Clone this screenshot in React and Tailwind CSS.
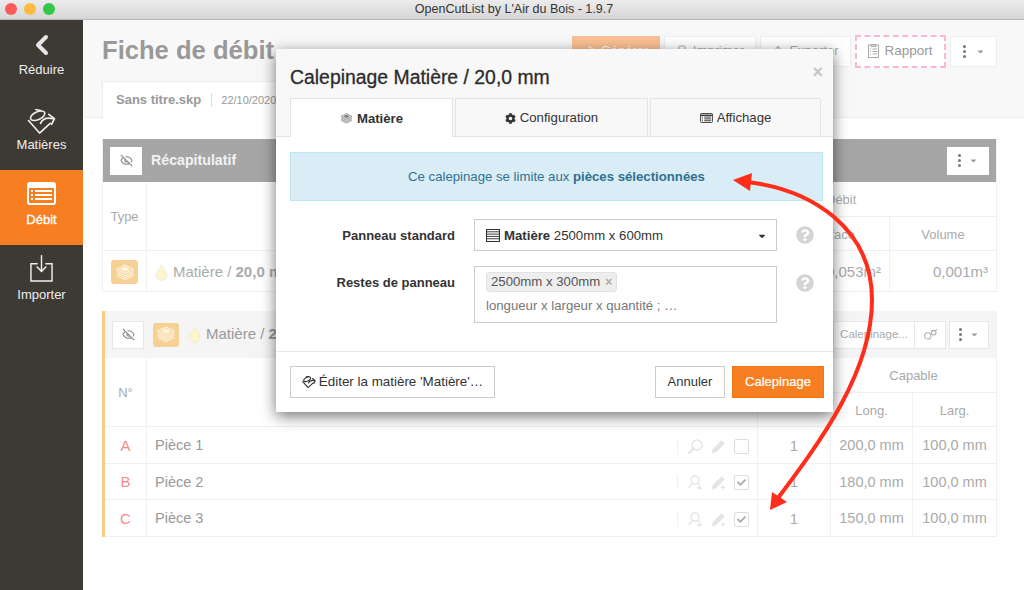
import { FaCog, FaQuestionCircle, FaCaretDown, FaCheck } from 'react-icons/fa';
import { EyeOff, Upload, Recycle, Printer } from 'lucide-react';

const StackIcon = ({ className, color = 'white' }) => (
    <svg viewBox="0 0 24 20" className={className} fill="none" stroke={color} strokeWidth="1.3" strokeLinejoin="round">
        <path d="M12 1 L22 6 L12 11 L2 6 Z" />
        <path d="M7 6 L12 8.5 L17 6 L12 3.5 Z" fill={color} />
        <path d="M2 8.5 L12 13.5 L22 8.5" />
        <path d="M2 11 L12 16 L22 11" />
        <path d="M2 13.5 L12 18.5 L22 13.5" />
    </svg>
);

const BucketIcon = ({ className, strokeWidth = 2 }) => (
    <svg viewBox="0 0 30 26" className={className} fill="none" stroke="currentColor" strokeWidth={strokeWidth} strokeLinejoin="round" strokeLinecap="round">
        <ellipse cx="11" cy="7" rx="8" ry="4" transform="rotate(-25 11 7)" />
        <path d="M9 0.5 L14 1.5" />
        <path d="M1.5 12 L13 25 L24 15" />
        <path d="M14 15 C16 10 20 8.5 27 10" />
        <path d="M22.5 5.5 L28.5 10 L25.5 16" />
    </svg>
);

const ListIcon = () => (
    <svg viewBox="0 0 29 23" className="w-[29px] h-[23px]">
        <rect x="0" y="0" width="29" height="23" rx="3" fill="white" />
        <rect x="2" y="6" width="25" height="15" fill="#f77f21" />
        <g fill="white">
            <rect x="4" y="8" width="2" height="2" />
            <rect x="4" y="12" width="2" height="2" />
            <rect x="4" y="16" width="2" height="2" />
            <rect x="8" y="8" width="17" height="2" />
            <rect x="8" y="12" width="17" height="2" />
            <rect x="8" y="16" width="17" height="2" />
        </g>
    </svg>
);

const ImportIcon = () => (
    <svg viewBox="0 0 24 28" className="w-[23px] h-[27px]" fill="none" stroke="#eeeeee" strokeWidth="1.5">
        <path d="M8 9 H1 V27 H23 V9 H16" />
        <path d="M12 0 V17" />
        <path d="M7 12 L12 17 L17 12" />
    </svg>
);

const Drop = ({ className }) => (
    <svg viewBox="0 0 14 18" className={className}>
        <path d="M7 1 C9 5 13 8 13 12 A6 5.5 0 0 1 1 12 C1 8 5 5 7 1 Z" fill="#fdf5cb" stroke="#e8e8e8" strokeWidth="0.8" />
    </svg>
);

const TableIcon = () => (
    <svg viewBox="0 0 15 14" className="w-[14px] h-[13px]" fill="none" stroke="#333333" strokeWidth="1">
        <rect x="0.5" y="0.5" width="14" height="13" fill="white" strokeWidth="1.2" />
        <path d="M0 3 H15 M0 5.5 H15 M0 8 H15 M0 10.5 H15" />
    </svg>
);

const SmallListIcon = () => (
    <svg viewBox="0 0 14 11" className="w-[13px] h-[10px]" fill="none" stroke="#333333" strokeWidth="1">
        <rect x="0.5" y="0.5" width="13" height="10" rx="1" />
        <path d="M0 2.5 H14" strokeWidth="1.5" />
        <path d="M2 4.5 H3 M4.5 4.5 H12 M2 6.5 H3 M4.5 6.5 H12 M2 8.5 H3 M4.5 8.5 H12" />
    </svg>
);

const ReportIcon = () => (
    <svg viewBox="0 0 11 14" className="w-[11px] h-[14px]" fill="none" stroke="#aaaaaa" strokeWidth="1">
        <rect x="0.5" y="1" width="10" height="12.5" />
        <path d="M3 0.5 H8 V2.5 H3 Z" />
        <path d="M2 5 H3 M4.5 5 H9 M2 7.5 H3 M4.5 7.5 H9 M2 10 H3 M4.5 10 H9" />
    </svg>
);

const LinkIcon = () => (
    <svg viewBox="0 0 16 12" className="w-[15px] h-[11px]" fill="none" stroke="#aaaaaa" strokeWidth="1.1">
        <circle cx="5" cy="7.5" r="3.5" />
        <circle cx="11.5" cy="4" r="2.5" />
        <path d="M13 2 L15 0.5" />
    </svg>
);

const SearchGlyph = () => (
    <svg viewBox="0 0 15 15" className="w-[15px] h-[15px]" fill="none" stroke="#e4e4e4" strokeWidth="1.4" strokeLinecap="round">
        <circle cx="9" cy="6" r="5" />
        <path d="M5.5 9.5 L1 14" strokeWidth="2.4" />
    </svg>
);

const PersonPlusGlyph = () => (
    <svg viewBox="0 0 15 15" className="w-[15px] h-[15px]" fill="none" stroke="#e4e4e4" strokeWidth="1.3" strokeLinecap="round">
        <circle cx="7" cy="5" r="4" />
        <path d="M1 13 C2 9.5 4 9 5.5 8.5 M8.5 8.5 C10 9 11 9.5 11.5 10" />
        <path d="M11.5 11 V15 M9.5 13 H13.5" />
    </svg>
);

const PencilGlyph = ({ plus }) => (
    <svg viewBox="0 0 15 15" className="w-[15px] h-[15px]" fill="#e4e4e4" stroke="#e4e4e4" strokeLinecap="round">
        <path d="M1 14 L2 10 L10.5 1.5 L13.5 4.5 L5 13 Z" strokeWidth="0.5" />
        {plus && <path d="M12 10.5 V14.5 M10 12.5 H14" fill="none" strokeWidth="1.2" />}
    </svg>
);

const KebabCaret = ({ gap = 'gap-[8px]' }) => (
    <span className={`flex items-center ${gap} text-[#777777]`}>
        <span className="flex flex-col gap-[2px]">
            <span className="w-[3px] h-[3px] rounded-full bg-current" />
            <span className="w-[3px] h-[3px] rounded-full bg-current" />
            <span className="w-[3px] h-[3px] rounded-full bg-current" />
        </span>
        <FaCaretDown className="w-[9px] h-[9px] text-[#999999]" />
    </span>
);

const SideItem = ({ icon, label, active, iconGap = 'mb-0' }) => (
    <div className={`h-[75px] flex flex-col items-center justify-end pb-[18px] gap-[3px] text-[13px] ${active ? 'bg-[#f77f21] text-white [-webkit-text-stroke:0.3px_white]' : 'text-[#eeeeee]'}`}>
        <span className={iconGap}>{icon}</span>
        <span className="leading-[15px]">{label}</span>
    </div>
);

const pieces = [
    { ref: 'A', name: 'Pièce 1', length: '200,0 mm', h: 'h-[37px]', selectable: false },
    { ref: 'B', name: 'Pièce 2', length: '180,0 mm', h: 'h-[36px]', selectable: true },
    { ref: 'C', name: 'Pièce 3', length: '150,0 mm', h: 'h-[37px]', selectable: true },
];

const cell = 'flex items-center pt-[2px] border-r border-b border-[#f0f0f0]';

const App = () => {
    return (
        <div className="relative w-[1024px] h-[590px] overflow-hidden bg-white font-['Liberation_Sans',Arial,sans-serif] flex flex-col">
            {/* title bar */}
            <div className="relative h-[20px] shrink-0 pl-[4px] bg-gradient-to-b from-[#ececec] to-[#d6d6d6] border-b border-[#b5b5b5] flex items-center justify-center text-[12.5px] text-[#333]">
                <div className="absolute left-[5px] top-[3px] flex gap-[7px]">
                    <span className="w-[12px] h-[12px] rounded-full bg-[#fc5b57]" />
                    <span className="w-[12px] h-[12px] rounded-full bg-[#fdbb40]" />
                    <span className="w-[12px] h-[12px] rounded-full bg-[#33c748]" />
                </div>
                OpenCutList by L'Air du Bois - 1.9.7
            </div>

            <div className="flex flex-1 min-h-0">
                {/* sidebar */}
                <aside className="w-[83px] shrink-0 bg-[#3d3a34]">
                    <SideItem
                        label="Réduire"
                        iconGap="mb-[3px]"
                        icon={<svg viewBox="0 0 14 22" className="w-[14px] h-[22px]" fill="none" stroke="#e6e6e6" strokeWidth="4" strokeLinecap="round" strokeLinejoin="round"><path d="M11 3 L3 11 L11 19" /></svg>}
                    />
                    <SideItem label="Matières" icon={<BucketIcon className="w-[29px] h-[25px] text-[#eeeeee]" strokeWidth={1.7} />} />
                    <SideItem label="Débit" active iconGap="mb-[4px]" icon={<ListIcon />} />
                    <SideItem label="Importer" iconGap="mb-[2px]" icon={<ImportIcon />} />
                </aside>

                <main className="flex-1 min-w-0">
                    {/* page header */}
                    <div className="h-[98px] bg-[#f8f8f8] pl-[19px] pr-[27px] pt-[15px] border-b border-[#eeeeee]">
                        <div className="flex items-center justify-between h-[32px]">
                            <h1 className="text-[25.6px] font-bold text-[#999999] leading-none">Fiche de débit</h1>
                            <div className="flex items-center gap-[4px] text-[13px] text-[#aaaaaa]">
                                <div className="w-[88px] h-[31px] bg-[#fbc093] flex items-center justify-center gap-[5px] text-white">
                                    <Recycle className="w-[12px] h-[12px]" />
                                    Générer
                                </div>
                                <div className="w-[92px] h-[31px] bg-white border border-[#eeeeee] flex items-center justify-center gap-[5px]">
                                    <Printer className="w-[12px] h-[12px]" />
                                    Imprimer
                                </div>
                                <div className="w-[91px] h-[31px] bg-white border border-[#eeeeee] flex items-center justify-center gap-[5px]">
                                    <Upload className="w-[12px] h-[12px]" />
                                    Exporter
                                </div>
                                <div className="w-[91px] h-[33px] bg-white border-2 border-dashed border-[#fbb6d8] flex items-center justify-center gap-[5px] text-[13.5px] text-[#999999]">
                                    <ReportIcon />
                                    Rapport
                                </div>
                                <div className="w-[47px] h-[31px] bg-white border border-[#eeeeee] flex items-center justify-center">
                                    <KebabCaret gap="gap-[10px]" />
                                </div>
                            </div>
                        </div>
                        <div className="mt-[14px] w-[400px] h-[37px] bg-white border-l border-t border-[#eeeeee] flex items-center pl-[13px] text-[#999999]">
                            <span className="text-[13px] font-bold pr-[10px] border-r border-[#dddddd] leading-[14px]">Sans titre.skp</span>
                            <span className="text-[11px] pl-[9px]">22/10/2020</span>
                        </div>
                    </div>

                    <div className="pl-[19px] pr-[27px] pt-[21px]">
                        {/* summary panel */}
                        <section className="border border-[#f0f0f0] border-t-0">
                            <div className="h-[43px] bg-[#a6a6a6] flex items-center justify-between pl-[7px] pr-[7px]">
                                <div className="flex items-center gap-[9px]">
                                    <div className="w-[32px] h-[28px] bg-white flex items-center justify-center text-[#888888]">
                                        <EyeOff className="w-[13px] h-[13px]" />
                                    </div>
                                    <span className="text-[14.2px] font-bold text-[#f2f2f2]">Récapitulatif</span>
                                </div>
                                <div className="w-[42px] h-[28px] bg-white flex items-center justify-center"><KebabCaret /></div>
                            </div>
                            <div className="grid grid-cols-[44px_1fr_114px_106px] grid-rows-[35px_34px_40px] text-[13px] text-[#aaaaaa]">
                                <div className={`${cell} row-span-2 justify-center`}>Type</div>
                                <div className={`${cell} row-span-2`} />
                                <div className={`${cell} col-span-2 pl-[50px] border-r-0`}>Débit</div>
                                <div className={`${cell} justify-center`}>Surface</div>
                                <div className={`${cell} justify-center border-r-0`}>Volume</div>
                                <div className={`${cell} justify-center border-b-0`}>
                                    <div className="w-[27px] h-[24px] rounded-[3px] bg-[#f6d194] flex items-center justify-center">
                                        <StackIcon className="w-[20px] h-[17px]" color="#fdf3df" />
                                    </div>
                                </div>
                                <div className={`${cell} border-b-0 pl-[8px] gap-[5px] text-[15px]`}>
                                    <Drop className="w-[13px] h-[17px]" />
                                    <span>Matière / <b>20,0 mm</b></span>
                                </div>
                                <div className={`${cell} border-b-0 justify-end pr-[8px] text-[15px]`}>0,053m²</div>
                                <div className="flex items-center justify-end pt-[2px] pr-[8px] text-[15px]">0,001m³</div>
                            </div>
                        </section>

                        {/* material panel */}
                        <section className="mt-[19px] border-l-[3px] border-[#f5cd85] border-r border-r-[#f0f0f0]">
                            <div className="h-[47px] bg-[#f5f5f5] flex items-center justify-between pl-[7px] pr-[7px]">
                                <div className="flex items-center">
                                    <div className="w-[32px] h-[28px] bg-white border border-[#e8e8e8] flex items-center justify-center text-[#888888]">
                                        <EyeOff className="w-[13px] h-[13px]" />
                                    </div>
                                    <div className="ml-[9px] w-[26px] h-[24px] rounded-[3px] bg-[#f6d194] flex items-center justify-center">
                                        <StackIcon className="w-[20px] h-[17px]" color="#fdf3df" />
                                    </div>
                                    <Drop className="ml-[9px] w-[13px] h-[17px]" />
                                    <span className="ml-[5px] text-[15px] text-[#999999]">Matière / <b>20,0 mm</b></span>
                                </div>
                                <div className="flex items-center h-[28px] text-[11.5px] text-[#aaaaaa]">
                                    <div className="w-[82px] h-full bg-white border border-[#e8e8e8] flex items-center justify-center">Calepinage...</div>
                                    <div className="w-[31px] h-full bg-white border-y border-r border-[#e8e8e8] flex items-center justify-center">
                                        <LinkIcon />
                                    </div>
                                    <div className="ml-[3px] w-[40px] h-full bg-white border border-[#e8e8e8] flex items-center justify-center"><KebabCaret /></div>
                                </div>
                            </div>
                            <div className="grid grid-cols-[42px_1fr_73px_82px_83px] text-[#aaaaaa]">
                                <div className={`${cell} row-span-2 h-[69px] justify-center text-[13px]`}>N°</div>
                                <div className={`${cell} row-span-2`} />
                                <div className={`${cell} row-span-2`} />
                                <div className={`${cell} col-span-2 h-[35px] justify-center border-r-0 text-[13px]`}>Capable</div>
                                <div className={`${cell} h-[34px] justify-center text-[13px]`}>Long.</div>
                                <div className={`${cell} justify-center border-r-0 text-[13px]`}>Larg.</div>
                                {pieces.map((p) => (
                                    <div key={p.ref} className="contents">
                                        <div className={`${cell} ${p.h} justify-center text-[15px] text-[#f78b8b]`}>{p.ref}</div>
                                        <div className={`${cell} justify-between pl-[8px] pr-[8px] text-[14.5px] text-[#999999]`}>
                                            <span>{p.name}</span>
                                            <div className="flex items-center">
                                                <span className="w-px h-[15px] bg-[#f0f0f0] mr-[10px]" />
                                                {p.selectable ? <PersonPlusGlyph /> : <SearchGlyph />}
                                                <span className="ml-[8px]"><PencilGlyph plus={p.selectable} /></span>
                                                <span className="ml-[8px] w-[15px] h-[15px] rounded-[2px] border-[1.5px] border-[#dddddd] flex items-center justify-center text-[#aaaaaa]">
                                                    {p.selectable && <FaCheck className="w-[9px] h-[9px]" />}
                                                </span>
                                            </div>
                                        </div>
                                        <div className={`${cell} justify-center text-[15px]`}>1</div>
                                        <div className={`${cell} justify-center text-[14.5px]`}>{p.length}</div>
                                        <div className={`${cell} justify-center border-r-0 text-[14.5px]`}>100,0 mm</div>
                                    </div>
                                ))}
                            </div>
                        </section>
                    </div>
                </main>
            </div>

            {/* modal */}
            <div className="absolute left-[276px] top-[49px] w-[557px] h-[363px] bg-white shadow-[0_4px_14px_rgba(0,0,0,0.55)] flex flex-col">
                <div className="relative h-[88px] shrink-0 bg-[#f8f8f8] border-b border-[#e4e4e4] px-[14px]">
                    <h2 className="pt-[18px] text-[19.4px] leading-[21px] text-[#2c2c2c] [-webkit-text-stroke:0.3px_#2c2c2c]">Calepinage Matière / 20,0 mm</h2>
                    <span className="absolute right-[10px] top-[14px] text-[18px] leading-[18px] font-bold text-[#c4c4c4]">×</span>
                    <div className="absolute left-[14px] top-[49px] flex gap-[2px] text-[13.2px] text-[#333]">
                        <div className="w-[163px] h-[39px] pt-px bg-white border border-b-0 border-[#e4e4e4] flex items-center justify-center gap-[4px] font-bold">
                            <StackIcon className="w-[13px] h-[11px]" color="#777777" />
                            Matière
                        </div>
                        <div className="w-[193px] h-[39px] pt-px border border-[#e4e4e4] flex items-center justify-center gap-[4px]">
                            <FaCog className="w-[11px] h-[11px]" />
                            Configuration
                        </div>
                        <div className="w-[171px] h-[39px] pt-px border border-[#e4e4e4] flex items-center justify-center gap-[4px]">
                            <SmallListIcon />
                            Affichage
                        </div>
                    </div>
                </div>

                <div className="flex-1 px-[14px] pt-[15px]">
                    <div className="w-[533px] h-[49px] bg-[#d9edf7] border border-[#bce8f1] flex items-center justify-center text-[13.2px] text-[#31708f]">
                        <span>Ce calepinage se limite aux <b>pièces sélectionnées</b></span>
                    </div>

                    <div className="mt-[18px] flex items-center">
                        <label className="w-[165px] pt-px text-right text-[13px] font-bold text-[#333]">Panneau standard</label>
                        <div className="ml-[19px] w-[303px] h-[32px] pt-px border border-[#cccccc] flex items-center justify-between pl-[11px] pr-[9px] text-[13.2px] text-[#333]">
                            <span className="flex items-center gap-[4px]">
                                <TableIcon />
                                <span><b>Matière</b> 2500mm x 600mm</span>
                            </span>
                            <FaCaretDown className="w-[10px] h-[10px]" />
                        </div>
                        <FaQuestionCircle className="ml-[19px] w-[18px] h-[18px] text-[#d4d4d4]" />
                    </div>

                    <div className="mt-[15px] flex items-start">
                        <label className="w-[165px] pt-[9px] text-right text-[13px] font-bold text-[#333] leading-[16px]">Restes de panneau</label>
                        <div className="ml-[19px] w-[303px] h-[57px] border border-[#cccccc] pl-[11px] pt-[5px] text-[13.2px] text-[#555]">
                            <span className="inline-flex items-center gap-[5px] h-[20px] px-[4px] bg-[#eeeeee] border border-[#e2e2e2] rounded-[3px]">
                                2500mm x 300mm
                                <span className="text-[#aaaaaa] font-bold text-[12px] leading-none">×</span>
                            </span>
                            <div className="mt-[6px] leading-[15px] text-[#777777]">longueur x largeur x quantité ; …</div>
                        </div>
                        <FaQuestionCircle className="ml-[19px] mt-[8px] w-[18px] h-[18px] text-[#d4d4d4]" />
                    </div>
                </div>

                <div className="h-[61px] shrink-0 border-t border-[#e8e8e8] flex items-center justify-between pl-[14px] pr-[9px] text-[13px]">
                    <div className="w-[205px] h-[32px] border border-[#cccccc] flex items-center justify-center gap-[3px] text-[13.4px] text-[#333]">
                        <BucketIcon className="w-[14px] h-[12px]" strokeWidth={2.4} />
                        Éditer la matière 'Matière'…
                    </div>
                    <div className="flex gap-[7px]">
                        <div className="w-[70px] h-[32px] border border-[#cccccc] flex items-center justify-center text-[#333]">Annuler</div>
                        <div className="w-[92px] h-[32px] bg-[#f77f21] border border-[#ee7614] flex items-center justify-center text-white [-webkit-text-stroke:0.2px_white]">Calepinage</div>
                    </div>
                </div>
            </div>

            {/* red annotation arrow */}
            <svg className="absolute left-0 top-0 w-[1024px] h-[590px] pointer-events-none" viewBox="0 0 1024 590" fill="none">
                <path d="M748 182 C812 190 872 228 872 300 C872 372 820 442 778 498" stroke="#ff2d1a" strokeWidth="4" />
                <path d="M733 180 L752 173 L750 191 Z" fill="#ff2d1a" />
                <path d="M770 510 L772 492 L787 502 Z" fill="#ff2d1a" />
            </svg>
        </div>
    );
};

export default App;
